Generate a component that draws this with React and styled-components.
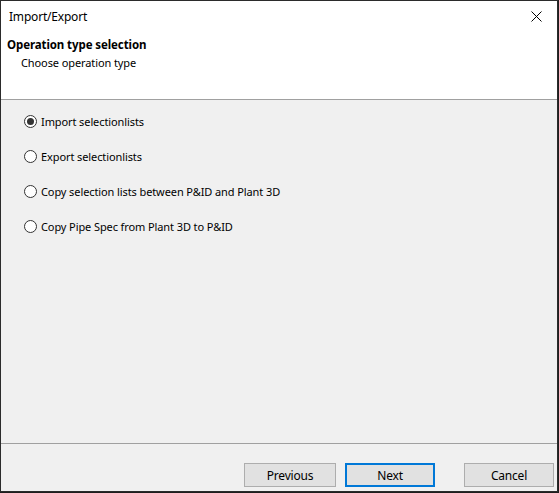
import React, { useState } from 'react';
import styled, { createGlobalStyle } from 'styled-components';

const GlobalStyle = createGlobalStyle`
  html, body {
    margin: 0;
    padding: 0;
    background: #1e1e1e;
  }
  body {
    font-family: 'Noto Sans', 'Open Sans', sans-serif;
    font-size: 11px;
    letter-spacing: -0.1px;
    color: #000;
  }
`;

const options = [
  'Import selectionlists',
  'Export selectionlists',
  'Copy selection lists between P&ID and Plant 3D',
  'Copy Pipe Spec from Plant 3D to P&ID',
];

const App = () => {
  const [selected, setSelected] = useState(0);

  return (
    <>
      <GlobalStyle />
      <Window>
        <TitleBar>
          <Title>Import/Export</Title>
          <CloseButton aria-label="Close">
            <svg width="11" height="11" viewBox="0 0 11 11">
              <path d="M0.5 0.5 L10.5 10.5 M10.5 0.5 L0.5 10.5" stroke="#000" strokeWidth="1" fill="none" />
            </svg>
          </CloseButton>
        </TitleBar>
        <Header>
          <HeaderTitle>Operation type selection</HeaderTitle>
          <HeaderSub>Choose operation type</HeaderSub>
        </Header>
        <Content>
          {options.map((label, i) => (
            <RadioRow key={label} onClick={() => setSelected(i)}>
              <RadioCircle $checked={selected === i} />
              <span>{label}</span>
            </RadioRow>
          ))}
        </Content>
        <Footer>
          <Button $w="92px">Previous</Button>
          <Button $w="90px" $primary>Next</Button>
          <Button $w="90px" $gapLeft>Cancel</Button>
        </Footer>
      </Window>
    </>
  );
};

const Window = styled.div`
  box-sizing: border-box;
  width: 558px;
  height: 492px;
  border: 1px solid #2b2b2b;
  display: flex;
  flex-direction: column;
  background: #f0f0f0;
`;

const TitleBar = styled.div`
  height: 30px;
  display: flex;
  align-items: center;
  justify-content: space-between;
  background: #fff;
  padding-left: 8px;
`;

const Title = styled.div`
  font-size: 12px;
  letter-spacing: -0.2px;
`;

const CloseButton = styled.div`
  width: 46px;
  height: 30px;
  display: flex;
  align-items: center;
  justify-content: center;
  margin-right: -2px;
`;

const Header = styled.div`
  height: 69px;
  box-sizing: border-box;
  background: #fff;
  border-bottom: 1px solid #a0a0a0;
  padding: 5px 0 0 6px;
`;

const HeaderTitle = styled.div`
  font-weight: bold;
  font-size: 11.5px;
  line-height: 17px;
`;

const HeaderSub = styled.div`
  padding-left: 14px;
  line-height: 17px;
  margin-top: 1px;
`;

const Content = styled.div`
  flex: 1;
  padding: 13px 0 0 23px;
  display: flex;
  flex-direction: column;
  gap: 18px;
`;

const RadioRow = styled.div`
  display: flex;
  align-items: center;
  gap: 4px;
  height: 17px;
  cursor: default;
`;

const RadioCircle = styled.div`
  width: 13px;
  height: 13px;
  box-sizing: border-box;
  border: 1px solid #333;
  border-radius: 50%;
  background: #fff;
  display: flex;
  align-items: center;
  justify-content: center;

  &::after {
    content: '';
    width: 7px;
    height: 7px;
    border-radius: 50%;
    background: #333;
    display: ${({ $checked }) => ($checked ? 'block' : 'none')};
  }
`;

const Footer = styled.div`
  height: 48px;
  box-sizing: border-box;
  border-top: 1px solid #a0a0a0;
  display: flex;
  justify-content: flex-end;
  align-items: flex-start;
  padding: 19px 3px 0 0;
  gap: 9px;
`;

const Button = styled.div`
  box-sizing: border-box;
  width: ${({ $w }) => $w};
  height: 24px;
  background: #e1e1e1;
  border: ${({ $primary }) => ($primary ? '2px solid #0078d7' : '1px solid #adadad')};
  display: flex;
  align-items: center;
  justify-content: center;
  margin-left: ${({ $gapLeft }) => ($gapLeft ? '20px' : '0')};
  font-size: 12px;
  letter-spacing: -0.2px;
`;

export default App;
